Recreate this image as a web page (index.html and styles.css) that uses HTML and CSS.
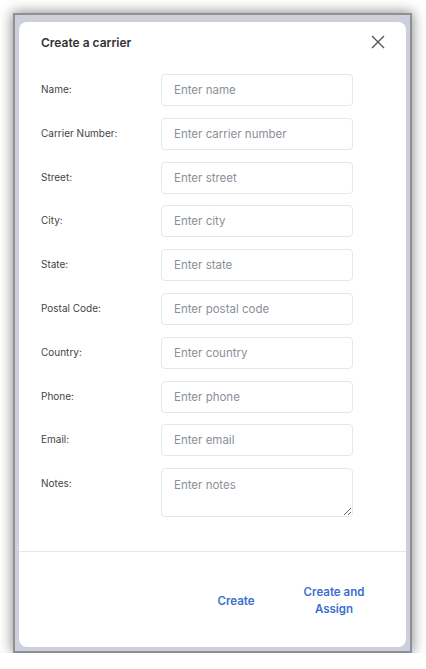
FILE: index.html
```html
<!DOCTYPE html>
<html lang="en">
<head>
  <meta charset="UTF-8">
  <meta name="viewport" content="width=device-width, initial-scale=1.0">
  <title>Create a carrier</title>
  <link rel="stylesheet" href="styles.css">
</head>
<body>
  <div class="frame">
    <div class="modal">
      <div class="modal-header">
        <h2>Create a carrier</h2>
        <button class="close" aria-label="Close">
          <svg width="14" height="14" viewBox="0 0 14 14">
            <path d="M1 1 L13 13 M13 1 L1 13" stroke="#555" stroke-width="1.4" fill="none"/>
          </svg>
        </button>
      </div>

      <form class="form">
        <label for="name">Name:</label>
        <input type="text" id="name" placeholder="Enter name">

        <label for="carrierNumber">Carrier Number:</label>
        <input type="text" id="carrierNumber" placeholder="Enter carrier number">

        <label for="street">Street:</label>
        <input type="text" id="street" placeholder="Enter street">

        <label for="city">City:</label>
        <input type="text" id="city" placeholder="Enter city">

        <label for="state">State:</label>
        <input type="text" id="state" placeholder="Enter state">

        <label for="postalCode">Postal Code:</label>
        <input type="text" id="postalCode" placeholder="Enter postal code">

        <label for="country">Country:</label>
        <input type="text" id="country" placeholder="Enter country">

        <label for="phone">Phone:</label>
        <input type="text" id="phone" placeholder="Enter phone">

        <label for="email">Email:</label>
        <input type="text" id="email" placeholder="Enter email">

        <label for="notes">Notes:</label>
        <textarea id="notes" placeholder="Enter notes"></textarea>
      </form>

      <div class="modal-footer">
        <button class="btn-link">Create</button>
        <button class="btn-link">Create and Assign</button>
      </div>
    </div>
  </div>
</body>
</html>
```

FILE: styles.css
```css
body {
  margin: 0;
  background: #fff;
  font-family: Inter, "Noto Sans", sans-serif;
  color: #333;
}
.frame {
  margin: 13px 0 0 13px;
  width: 388px;
  height: 626px;
  border: 2px solid #8f9096;
  background: #cdcfda;
  padding: 7px 3px 3px 4px;
  box-shadow: 0 0 12px 1px rgba(0, 0, 0, 0.45);
}
.modal {
  width: 387px;
  height: 625px;
  background: #fff;
  border-radius: 8px;
  display: flex;
  flex-direction: column;
}
.modal-header {
  display: flex;
  align-items: center;
  justify-content: space-between;
  padding: 12px 21px 0 22px;
  height: 18px;
}
.modal-header h2 {
  margin: 0;
  font-size: 12px;
  font-weight: 600;
  line-height: 18px;
  color: #333;
}
.close {
  border: none;
  background: none;
  padding: 0;
  width: 14px;
  height: 14px;
  display: flex;
  margin-top: -2px;
}
.form {
  display: grid;
  grid-template-columns: 120px 192px;
  row-gap: 11.8px;
  padding: 22px 22px 34px;
  border-bottom: 1px solid #e8e8ec;
}
.form label {
  font-size: 10px;
  line-height: 31px;
  color: #444;
}
.form input,
.form textarea {
  box-sizing: border-box;
  width: 192px;
  height: 32px;
  border: 1px solid #e5e7eb;
  border-radius: 4px;
  padding: 0 12px;
  font-family: inherit;
  font-size: 11.5px;
  color: #333;
  margin: 0;
}
.form textarea {
  height: 49px;
  padding: 8px 12px;
  line-height: 16px;
  resize: vertical;
}
.form input::placeholder,
.form textarea::placeholder {
  color: #8b9099;
}
.modal-footer {
  flex: 1;
  display: flex;
  align-items: center;
  justify-content: flex-end;
  gap: 22px;
  padding: 3px 34px 0 0;
}
.btn-link {
  width: 76px;
  padding: 0 4px;
  border: none;
  background: none;
  font-family: inherit;
  font-size: 11.5px;
  font-weight: 600;
  line-height: 17px;
  color: #3a6fcf;
  cursor: pointer;
}
```
